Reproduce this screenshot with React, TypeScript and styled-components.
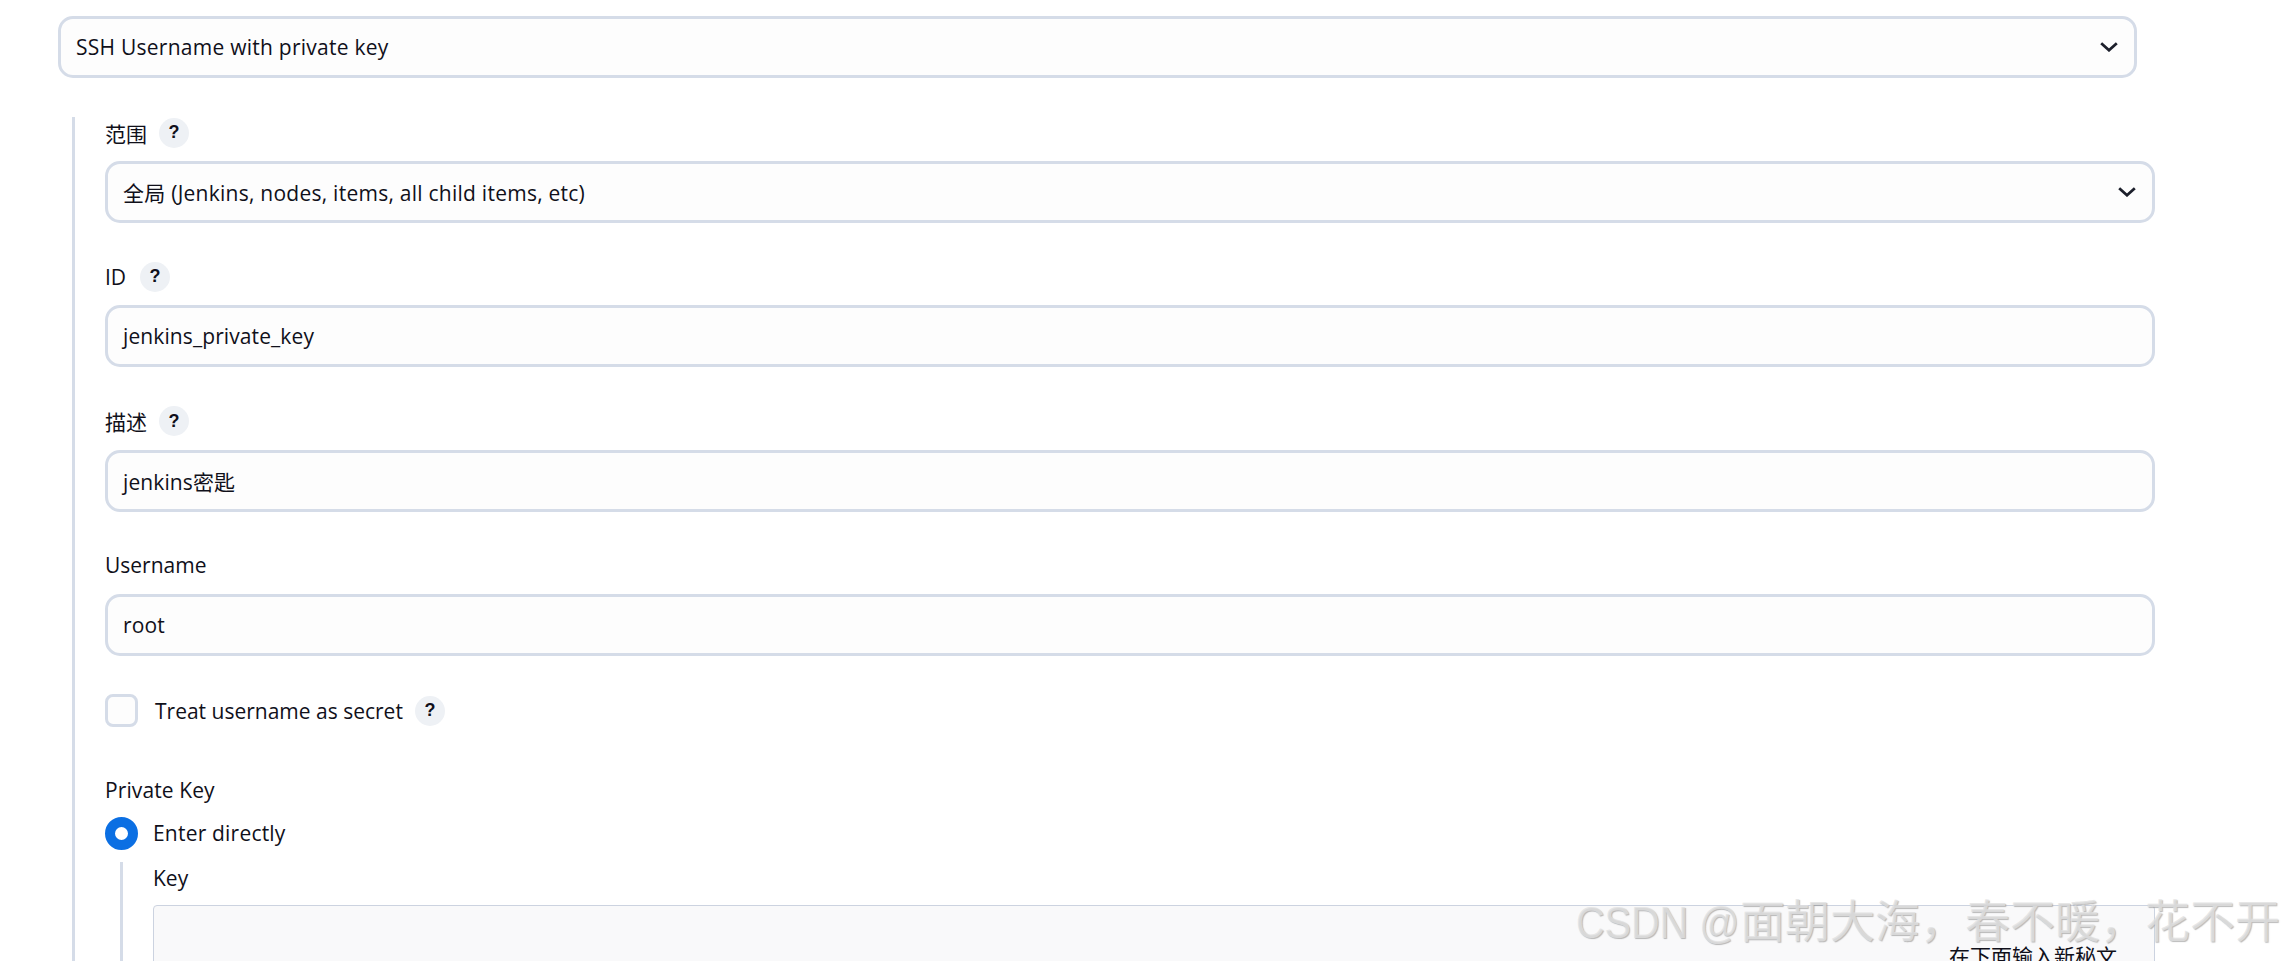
import { FC } from "react";
import styled, { createGlobalStyle } from "styled-components";

const GlobalStyle = createGlobalStyle`
  html, body {
    margin: 0;
    padding: 0;
    background: #ffffff;
    overflow: hidden;
  }
  body {
    font-family: "Open Sans", "Noto Sans CJK SC", sans-serif;
    font-size: 21px;
    color: #10101a;
  }
`;

const Page = styled.div`
  position: relative;
  width: 2285px;
  height: 961px;
  box-sizing: border-box;
  padding: 16px 0 0 58px;
  overflow: hidden;
`;

const Control = styled.div<{ $width: number }>`
  box-sizing: border-box;
  width: ${(p) => p.$width}px;
  height: 62px;
  padding: 0 16px 0 15px;
  display: flex;
  align-items: center;
  justify-content: space-between;
  background: #fdfdfd;
  border: 3px solid #d5dce8;
  border-radius: 15px;
  letter-spacing: 0.1px;
`;

const SelectText = styled.span`
  letter-spacing: 0.25px;
`;

const Section = styled.div`
  margin: 39px 0 0 14px;
  padding-left: 30px;
  border-left: 3px solid #d5dce8;
`;

const Group = styled.div`
  margin-bottom: 38.3px;
`;

const LabelRow = styled.div<{ $gap?: number }>`
  height: 31px;
  margin-bottom: 13px;
  display: flex;
  align-items: center;
  gap: ${(p) => p.$gap ?? 12}px;
`;

const Help = styled.span`
  box-sizing: border-box;
  width: 30px;
  height: 30px;
  display: flex;
  align-items: center;
  justify-content: center;
  border-radius: 50%;
  background: #eef1f5;
  font-family: "Liberation Sans", sans-serif;
  font-size: 18px;
  font-weight: 700;
`;

const CheckRow = styled.div`
  height: 33px;
  margin-top: 1px;
  display: flex;
  align-items: center;
  gap: 12px;
`;

const CheckBox = styled.span`
  box-sizing: border-box;
  width: 33px;
  height: 33px;
  margin-right: 5px;
  background: #fdfdfd;
  border: 3px solid #d5dce8;
  border-radius: 8px;
`;

const KeyLabel = styled.div`
  height: 31px;
  margin: 47px 0 12px;
  display: flex;
  align-items: center;
  letter-spacing: 0.1px;
`;

const RadioRow = styled.div`
  height: 33px;
  display: flex;
  align-items: center;
  gap: 15px;
  letter-spacing: 0.2px;
`;

const RadioText = styled.span`
  margin-top: -2px;
`;

const Radio = styled.span`
  box-sizing: border-box;
  width: 33px;
  height: 33px;
  border-radius: 50%;
  border: 10px solid #0b6fe3;
  background: #ffffff;
`;

const SubSection = styled.div`
  margin: 12px 0 0 15px;
  padding-left: 30px;
  border-left: 3px solid #d5dce8;
  height: 120px;
`;

const SubLabel = styled.div`
  height: 31px;
  margin-bottom: 12px;
  display: flex;
  align-items: center;
`;

const KeyArea = styled.div`
  box-sizing: border-box;
  width: 2002px;
  height: 80px;
  padding: 35px 37px 0 0;
  display: flex;
  justify-content: flex-end;
  background: #f9f9fa;
  border: 1px solid #ccd3e0;
  border-radius: 4px;
  line-height: 30px;
`;

const Watermark = styled.div`
  position: absolute;
  right: 5px;
  top: 895px;
  white-space: nowrap;
  font-family: "Liberation Sans", "Noto Sans CJK SC", sans-serif;
  font-size: 45px;
  line-height: 56px;
  color: rgba(226, 226, 226, 0.8);
  text-shadow: 1px 1px 1px rgba(130, 130, 130, 0.55);
`;

const WatermarkLatin = styled.span`
  display: inline-block;
  margin-right: -22px;
  transform: scaleX(0.88);
  transform-origin: left center;
`;

const Chevron: FC = () => (
  <svg width="18" height="10" viewBox="0 0 18 10" fill="none">
    <polyline points="1.2,1.2 9,8.2 16.8,1.2" stroke="#1c1f2b" strokeWidth="2.8" />
  </svg>
);

const App: FC = () => (
  <Page>
    <GlobalStyle />
    <Control $width={2079}>
      <SelectText>SSH Username with private key</SelectText>
      <Chevron />
    </Control>
    <Section>
      <Group>
        <LabelRow>
          范围<Help>?</Help>
        </LabelRow>
        <Control $width={2050}>
          <SelectText>全局 (Jenkins, nodes, items, all child items, etc)</SelectText>
          <Chevron />
        </Control>
      </Group>
      <Group>
        <LabelRow $gap={14}>
          ID<Help>?</Help>
        </LabelRow>
        <Control $width={2050}>jenkins_private_key</Control>
      </Group>
      <Group>
        <LabelRow>
          描述<Help>?</Help>
        </LabelRow>
        <Control $width={2050}>jenkins密匙</Control>
      </Group>
      <Group>
        <LabelRow>Username</LabelRow>
        <Control $width={2050}>root</Control>
      </Group>
      <CheckRow>
        <CheckBox />
        Treat username as secret
        <Help>?</Help>
      </CheckRow>
      <KeyLabel>Private Key</KeyLabel>
      <RadioRow>
        <Radio />
        <RadioText>Enter directly</RadioText>
      </RadioRow>
      <SubSection>
        <SubLabel>Key</SubLabel>
        <KeyArea>在下面输入新秘文</KeyArea>
      </SubSection>
    </Section>
    <Watermark>
      <WatermarkLatin>CSDN @</WatermarkLatin>面朝大海，春不暖，花不开
    </Watermark>
  </Page>
);

export default App;
